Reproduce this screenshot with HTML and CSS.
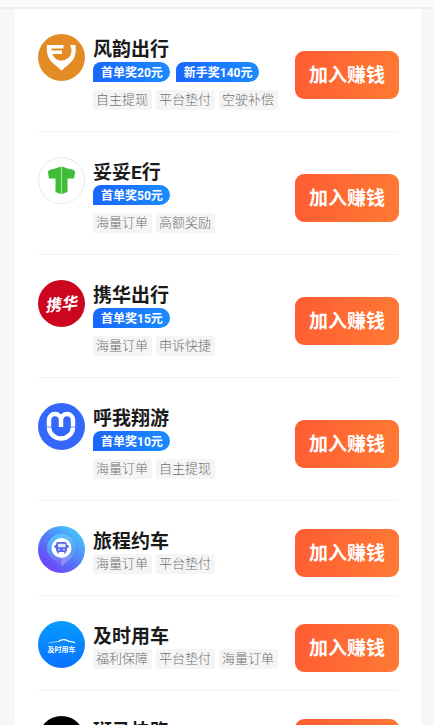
FILE: index.html
```html
<!DOCTYPE html>
<html lang="zh-CN">
<head>
<meta charset="utf-8">
<meta name="viewport" content="width=device-width, initial-scale=1">
<title>加入赚钱</title>
<link rel="stylesheet" href="styles.css">
</head>
<body>
<header class="topbar"></header>
<main class="card">
<ul class="list">
  <li class="item">
    <svg class="logo" viewBox="0 0 47 47" aria-hidden="true">
      <circle cx="23.500" cy="23.500" r="23.500" fill="#e38c25"/>
      <path d="M9 11H25.500V14.500H13.500V16.500H24V20H14.500C16 24.500 19.500 27 24 26.500C29.500 26 33.500 22 33.500 16.500C33.500 14.500 33 13 32 11H37.500C38.500 20 36.500 25.500 31 30L23.500 36.500L16 30C10.500 25.500 8 20 9 11Z" fill="#fff"/>
    </svg>
    <div class="info">
      <h2 class="name">风韵出行</h2>
      <div class="badges"><span class="badge">首单奖20元</span><span class="badge">新手奖140元</span></div>
      <div class="tags"><span class="tag">自主提现</span><span class="tag">平台垫付</span><span class="tag">空驶补偿</span></div>
    </div>
    <button class="join" type="button">加入赚钱</button>
  </li>
  <li class="item">
    <svg class="logo" viewBox="0 0 47 47" aria-hidden="true">
      <circle cx="23.500" cy="23.500" r="23" fill="#fff" stroke="#e8e8e8"/>
      <path d="M17.500 11.500L23 9.500V37L17.500 35V21.500H11L10 15.500Q10 13 13 12.500ZM24 9.500L29.500 11.500L34 12.500Q37 13 37 15.500L36 21.500H29.500V35L24 37Z" fill="#3fbd36"/>
      <path d="M23.500 10V37" stroke="#a5e2a0"/>
    </svg>
    <div class="info">
      <h2 class="name">妥妥E行</h2>
      <div class="badges"><span class="badge">首单奖50元</span></div>
      <div class="tags"><span class="tag">海量订单</span><span class="tag">高额奖励</span></div>
    </div>
    <button class="join" type="button">加入赚钱</button>
  </li>
  <li class="item">
    <svg class="logo" viewBox="0 0 47 47" aria-hidden="true">
      <circle cx="23.500" cy="23.500" r="23.500" fill="#cc061f"/>
      <text class="brush" x="23" y="30" text-anchor="middle" transform="rotate(-6 23 25)">携华</text>
    </svg>
    <div class="info">
      <h2 class="name">携华出行</h2>
      <div class="badges"><span class="badge">首单奖15元</span></div>
      <div class="tags"><span class="tag">海量订单</span><span class="tag">申诉快捷</span></div>
    </div>
    <button class="join" type="button">加入赚钱</button>
  </li>
  <li class="item">
    <svg class="logo" viewBox="0 0 47 47" aria-hidden="true">
      <circle cx="23.500" cy="23.500" r="23.500" fill="#3467fb"/>
      <path d="M11 24V17A6 6 0 0 1 23 17V24V17A6 6 0 0 1 35 17V24A12 11.500 0 0 1 11 24Z" fill="none" stroke="#fff" stroke-width="4.500"/>
      <path d="M8 24H14M32 24H38" stroke="#3467fb" stroke-width="0.700"/>
    </svg>
    <div class="info">
      <h2 class="name">呼我翔游</h2>
      <div class="badges"><span class="badge">首单奖10元</span></div>
      <div class="tags"><span class="tag">海量订单</span><span class="tag">自主提现</span></div>
    </div>
    <button class="join" type="button">加入赚钱</button>
  </li>
  <li class="item">
    <svg class="logo" viewBox="0 0 47 47" aria-hidden="true">
      <defs>
        <linearGradient id="trip" x1="0.850" y1="0.100" x2="0.200" y2="0.900"><stop offset="0" stop-color="#45c7fb"/><stop offset="0.500" stop-color="#527ff8"/><stop offset="1" stop-color="#6c43fa"/></linearGradient>
        <linearGradient id="pin" x1="0.500" y1="0" x2="0.500" y2="1"><stop offset="0" stop-color="#5fc5fd"/><stop offset="0.550" stop-color="#559bf6"/><stop offset="1" stop-color="#b48cf6"/></linearGradient>
        <linearGradient id="shade" x1="0" y1="0" x2="0" y2="1"><stop offset="0" stop-color="#5a8af8" stop-opacity="0"/><stop offset="1" stop-color="#6a50f8"/></linearGradient>
      </defs>
      <circle cx="23.500" cy="23.500" r="23.500" fill="url(#trip)"/>
      <path d="M23.500 40C17 34.500 9 30.500 9 21.500A14.500 13.500 0 0 1 38 21.500C38 30.500 30 34.500 23.500 40Z" fill="url(#pin)"/>
      <path d="M23.500 40C17 34.500 9 30.500 9 21.500H23.500Z" fill="url(#shade)"/>
      <circle cx="23.500" cy="22" r="10" fill="#fff"/>
      <rect x="18" y="16" width="11" height="10" rx="2" fill="#5967ea"/>
      <path d="M20 17.800H27.500V21.300H20Z" fill="#dce8ff"/>
      <path d="M17.200 19V22M29.800 19V22M20 25.500V27.500M27 25.500V27.500" stroke="#5967ea" stroke-width="1.500"/>
      <path d="M20 23.800H22M25 23.800H27" stroke="#fff"/>
    </svg>
    <div class="info">
      <h2 class="name">旅程约车</h2>
      <div class="tags"><span class="tag">海量订单</span><span class="tag">平台垫付</span></div>
    </div>
    <button class="join" type="button">加入赚钱</button>
  </li>
  <li class="item">
    <svg class="logo" viewBox="0 0 47 47" aria-hidden="true">
      <defs><linearGradient id="sky" x1="0" y1="0" x2="0" y2="1"><stop offset="0" stop-color="#059cff"/><stop offset="1" stop-color="#0a72ff"/></linearGradient></defs>
      <circle cx="23.500" cy="23.500" r="23.500" fill="url(#sky)"/>
      <path d="M9 22.500Q12 20.500 19.500 20.500Q23.500 17.500 28 18.200Q31 20.200 34.500 20.300Q37.500 20.800 37.500 22.500Q35 21.200 31 21Q27 18.800 24 19.500Q21 21.500 18 21.300Q13 21.300 9 22.500Z" fill="#fff"/>
      <text class="wordmark" x="23.500" y="30.500" text-anchor="middle">及时用车</text>
    </svg>
    <div class="info">
      <h2 class="name">及时用车</h2>
      <div class="tags"><span class="tag">福利保障</span><span class="tag">平台垫付</span><span class="tag">海量订单</span></div>
    </div>
    <button class="join" type="button">加入赚钱</button>
  </li>
  <li class="item">
    <svg class="logo" viewBox="0 0 47 47" aria-hidden="true"><circle cx="23.500" cy="23.500" r="23.500" fill="#000"/></svg>
    <div class="info">
      <h2 class="name">斑马快跑</h2>
      <div class="tags"><span class="tag">海量订单</span></div>
    </div>
    <button class="join" type="button">加入赚钱</button>
  </li>
</ul>
</main>
</body>
</html>
```
FILE: styles.css
```css
* { box-sizing: border-box; }

html { scrollbar-width: none; }

body {
  margin: 0;
  background: #f7f7f7;
  color: #1a1a1a;
  font-family: Roboto, "Noto Sans CJK SC", sans-serif;
}

.topbar {
  height: 9px;
  background: #fafafa;
  border-bottom: 2px solid #eee;
}

.card {
  margin: 0 13px 0 15px;
  padding: 0 22px 0 23px;
  background: #fff;
}

.list {
  margin: 0;
  padding: 0;
  list-style: none;
}

.item {
  display: flex;
  align-items: center;
  padding: 25px 0 21px;
  border-bottom: 1px solid #f3f3f3;
}

.logo {
  flex: none;
  align-self: flex-start;
  width: 47px;
  height: 47px;
}

.brush {
  font: italic 700 16px "Noto Sans CJK SC", sans-serif;
  fill: #fff;
}

.wordmark {
  font: 700 7px "Noto Sans CJK SC", sans-serif;
  fill: #fff;
}

.info {
  flex: 1;
  min-width: 0;
  margin-left: 8px;
}

.name {
  margin: 0;
  padding-top: 4px;
  font-size: 19px;
  font-weight: 700;
  line-height: 24px;
}

.badges {
  display: flex;
  gap: 6px;
  margin-bottom: 8px;
}

.badge {
  padding: 2px 7px 0 8px;
  border-radius: 8px 10px 10px 0;
  background: linear-gradient(90deg, #1a66ff, #1a8cff);
  color: #fff;
  font-size: 12px;
  font-weight: 700;
  line-height: 18px;
  white-space: nowrap;
}

.tags {
  display: flex;
  gap: 4px;
}

.tag {
  padding: 0 4px 0 3px;
  border-radius: 2px;
  background: #f5f5f5;
  color: #707070;
  font-size: 13px;
  font-weight: 300;
  line-height: 20px;
  white-space: nowrap;
}

.join {
  flex: none;
  width: 104px;
  height: 48px;
  margin: 3px 0 -3px;
  padding: 0 0 4px;
  border: 0;
  border-radius: 9px;
  background: linear-gradient(100deg, #ff5c33, #ff7a33);
  color: #fff;
  font-family: inherit;
  font-size: 19px;
  font-weight: 700;
}
```
